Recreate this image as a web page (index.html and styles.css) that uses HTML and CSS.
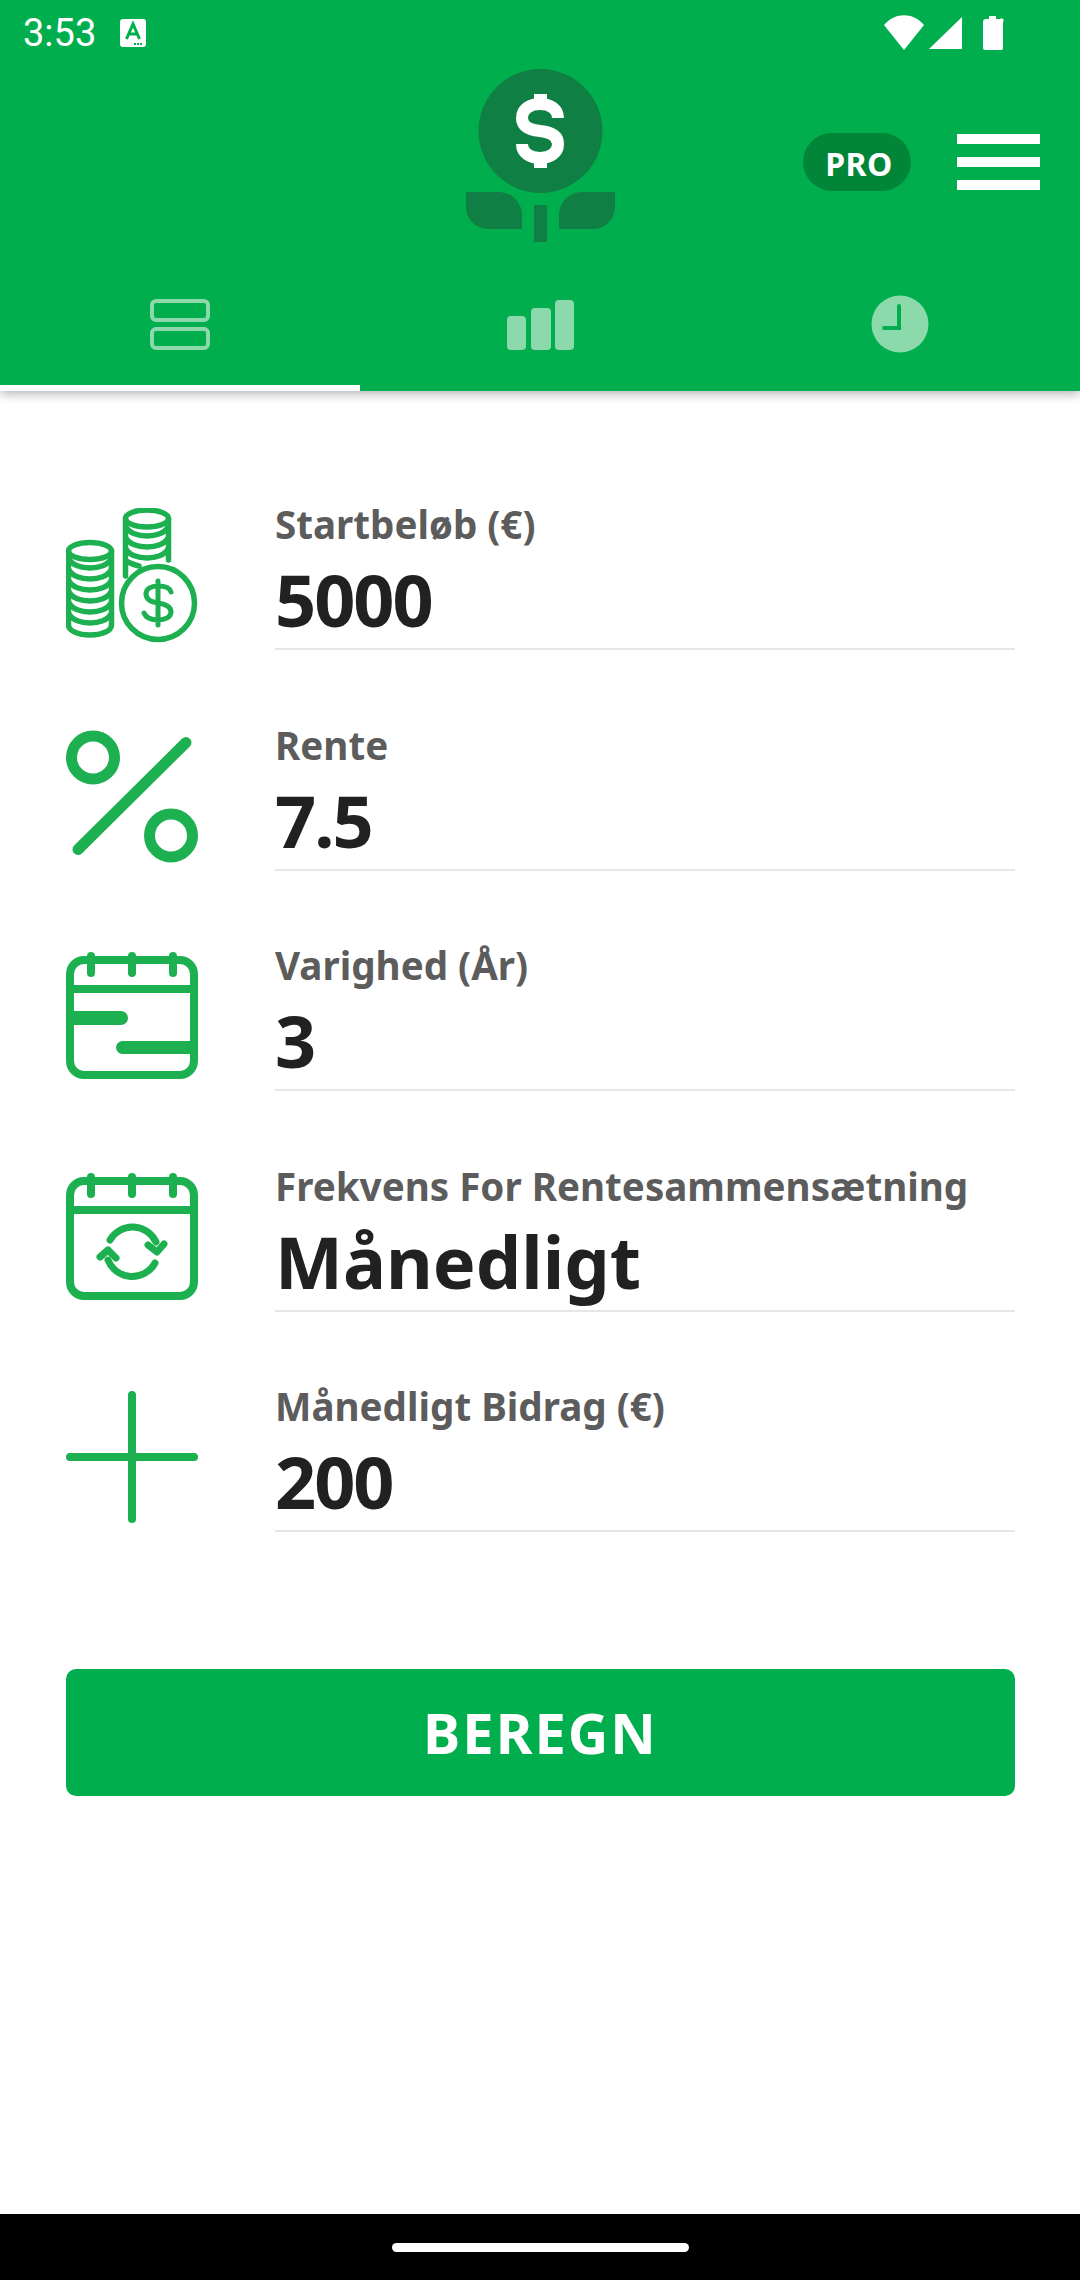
FILE: index.html
```html
<!DOCTYPE html>
<html lang="da">
<head>
    <meta charset="UTF-8">
    <meta name="viewport" content="width=device-width, initial-scale=1.0">
    <title>Rentes rente</title>
    <link rel="stylesheet" href="styles.css">
</head>
<body>
    <div class="app">
        <header class="appbar">
            <div class="statusbar">
                <span class="clock">3:53</span>
                <svg class="status-a" viewBox="0 0 26 28">
                    <path fill="#fff" d="M3 0h20a3 3 0 0 1 3 3v22a3 3 0 0 1-3 3H3a3 3 0 0 1-3-3V3a3 3 0 0 1 3-3z"/>
                    <path fill="none" stroke="#00ae4d" stroke-width="3" d="M6.500 20L13 5l6.500 15M9 15h8"/>
                    <path stroke="#00ae4d" stroke-width="2" stroke-dasharray="2 1" d="M14 25h9"/>
                </svg>
                <svg class="status-icons" viewBox="0 0 120 36">
                    <path fill="#fff" d="M0 10C11-3 29-3 40 10L20 35z"/>
                    <path fill="#fff" d="M45 34L78 2v32z"/>
                    <path fill="#fff" d="M105 4V1h7v3h4a2 2 0 0 1 3 3v26a2 2 0 0 1-2 2H101a2 2 0 0 1-2-2V7a3 3 0 0 1 3-3z"/>
                </svg>
            </div>
            <div class="toolbar">
                <div></div>
                <svg class="logo" viewBox="0 0 149 173">
                    <circle cx="74.500" cy="62" r="62" fill="#0f7f43"/>
                    <path fill="#0f7f43" d="M0 123h33a23 23 0 0 1 23 23v14H22A22 22 0 0 1 0 138z"/>
                    <path fill="#0f7f43" d="M149 123h-33a23 23 0 0 0-23 23v14h34a22 22 0 0 0 22-22z"/>
                    <path fill="#0f7f43" d="M68 136h13v37H68z"/>
                    <path fill="none" stroke="#fff" stroke-width="12" d="M92 49c0-9-8-14-18-14s-18 5-18 14 8 12 18 13 18 4 18 13-8 14-18 14-18-5-18-14"/>
                    <path fill="#fff" d="M68 25h13v12H68zM68 87h13v12H68z"/>
                </svg>
                <div class="toolbar-actions">
                    <span class="pro">PRO</span>
                    <div class="menu"><span></span><span></span><span></span></div>
                </div>
            </div>
            <nav class="tabs">
                <div class="tab active">
                    <svg class="tab-icon" viewBox="0 0 60 60">
                        <rect x="2" y="7" width="56" height="19" rx="4" fill="none" stroke="#8cd9ac" stroke-width="4"/>
                        <rect x="2" y="35" width="56" height="19" rx="4" fill="none" stroke="#8cd9ac" stroke-width="4"/>
                    </svg>
                </div>
                <div class="tab">
                    <svg class="tab-icon" viewBox="0 0 68 60">
                        <rect x="1" y="22" width="19" height="34" rx="4" fill="#8cd9ac"/>
                        <rect x="25" y="14" width="20" height="42" rx="4" fill="#8cd9ac"/>
                        <rect x="49" y="6" width="19" height="50" rx="4" fill="#8cd9ac"/>
                    </svg>
                </div>
                <div class="tab">
                    <svg class="tab-icon" viewBox="0 0 60 60">
                        <circle cx="30" cy="30" r="28.500" fill="#8cd9ac"/>
                        <path fill="none" stroke="#00ae4d" stroke-width="4" stroke-linecap="round" d="M29 12v22H14"/>
                    </svg>
                </div>
            </nav>
        </header>

        <main class="form">
            <div class="row">
                <svg class="row-icon" viewBox="0 0 132 136">
                    <g fill="none" stroke="#1db050" stroke-width="5.500" stroke-linecap="round">
                        <ellipse cx="24" cy="43" rx="21.500" ry="8.500"/>
                        <path d="M2.500 43v74c0 6 10 10 21.500 10s21.500-4 21.500-10V43"/>
                        <path d="M3 51c3 6 12 9 21 9s18-3 21-9M3 62c3 6 12 9 21 9s18-3 21-9M3 73c3 6 12 9 21 9s18-3 21-9M3 84c3 6 12 9 21 9s18-3 21-9M3 95c3 6 12 9 21 9s18-3 21-9M3 106c3 6 12 9 21 9s18-3 21-9"/>
                        <ellipse cx="81" cy="10.500" rx="21.500" ry="8.500"/>
                        <path d="M59.500 11v57M102.500 11v41"/>
                        <path d="M60 19c3 6 12 9 21 9s18-3 21-9M60 30c3 6 12 9 21 9s18-3 21-9M60 41c3 6 12 9 21 9s18-3 21-9M60 53c4 2 8 4 13 5"/>
                        <circle cx="92" cy="95" r="36.500"/>
                        <path stroke-width="5" d="M105 84c-1-4-6-6-13-6s-12 3-12 8 5 8 12 9 13 4 13 9-6 8-13 8-12-2-14-7M92 73v44"/>
                    </g>
                </svg>
                <div class="field">
                    <label class="field-label">Startbeløb (€)</label>
                    <div class="field-value num">5000</div>
                </div>
            </div>
            <div class="row">
                <svg class="row-icon" viewBox="0 0 132 136">
                    <g fill="none" stroke="#1db050" stroke-width="11" stroke-linecap="round">
                        <circle cx="27" cy="28.500" r="21.500"/>
                        <circle cx="105" cy="106.500" r="21.500"/>
                        <path d="M12 120.500L120 13.500"/>
                    </g>
                </svg>
                <div class="field">
                    <label class="field-label">Rente</label>
                    <div class="field-value num">7.5</div>
                </div>
            </div>
            <div class="row">
                <svg class="row-icon" viewBox="0 0 132 136">
                    <g fill="none" stroke="#1db050" stroke-width="8" stroke-linecap="round">
                        <rect x="4" y="11" width="124" height="115" rx="14"/>
                        <path d="M25 7v17M66 7v17M107 7v17"/>
                        <path stroke-linecap="butt" d="M4 40h124"/>
                        <path stroke-width="14" d="M7 69h48"/>
                        <path stroke-width="13" d="M56.500 98.500H128"/>
                    </g>
                </svg>
                <div class="field">
                    <label class="field-label">Varighed (År)</label>
                    <div class="field-value num">3</div>
                </div>
            </div>
            <div class="row">
                <svg class="row-icon" viewBox="0 0 132 136">
                    <g fill="none" stroke="#1db050" stroke-width="8" stroke-linecap="round" stroke-linejoin="round">
                        <rect x="4" y="11" width="124" height="115" rx="14"/>
                        <path d="M25 7v17M66 7v17M107 7v17"/>
                        <path stroke-linecap="butt" d="M4 40h124"/>
                        <path stroke-width="7" d="M44 70A26 26 0 0 1 90 72M89 93A26 26 0 0 1 42 90"/>
                        <path stroke-width="7" d="M82 75l9 7 7-8M34 87l8-7 8 8"/>
                    </g>
                </svg>
                <div class="field">
                    <label class="field-label">Frekvens For Rentesammensætning</label>
                    <div class="field-value">Månedligt</div>
                </div>
            </div>
            <div class="row">
                <svg class="row-icon" viewBox="0 0 132 136">
                    <path fill="none" stroke="#1db050" stroke-width="8" stroke-linecap="round" d="M66 5v124M4 67h124"/>
                </svg>
                <div class="field">
                    <label class="field-label">Månedligt Bidrag (€)</label>
                    <div class="field-value num">200</div>
                </div>
            </div>
            <button class="calc-btn" type="button">BEREGN</button>
        </main>

        <footer class="navbar"><span class="nav-pill"></span></footer>
    </div>
</body>
</html>
```

FILE: styles.css
```css
* {
    box-sizing: border-box;
}
body {
    margin: 0;
    background: #fff;
    font-family: 'Noto Sans', 'Open Sans', sans-serif;
}
.app {
    width: 1080px;
    height: 2280px;
    display: flex;
    flex-direction: column;
}
.appbar {
    height: 391px;
    background: #00ae4d;
    box-shadow: 0 3px 10px rgba(0,0,0,0.3);
    position: relative;
}
.statusbar {
    height: 66px;
    display: flex;
    align-items: center;
    padding: 0 76px 0 23px;
    color: #fff;
}
.clock {
    font-family: Roboto, sans-serif;
    font-size: 38px;
    width: 97px;
}
.status-a {
    width: 26px;
    height: 28px;
}
.status-icons {
    width: 120px;
    height: 36px;
    margin-left: auto;
}
.toolbar {
    height: 192px;
    display: grid;
    grid-template-columns: 466px 149px 1fr;
    padding-top: 3px;
}
.logo {
    width: 149px;
    height: 173px;
}
.toolbar-actions {
    display: flex;
    justify-content: flex-end;
    align-items: flex-start;
    padding: 64px 40px 0 0;
    gap: 46px;
}
.pro {
    width: 108px;
    height: 58px;
    border-radius: 29px;
    background: #008539;
    color: #fff;
    font-size: 32px;
    font-weight: 700;
    letter-spacing: 0.5px;
    padding: 3px 0 0 4px;
    display: flex;
    align-items: center;
    justify-content: center;
}
.menu {
    width: 83px;
    height: 56px;
    margin-top: 1px;
    display: flex;
    flex-direction: column;
    justify-content: space-between;
}
.menu span {
    height: 10px;
    background: #fff;
}
.tabs {
    height: 133px;
    display: grid;
    grid-template-columns: repeat(3, 360px);
}
.tab {
    display: flex;
    justify-content: center;
    padding-top: 36px;
    border-bottom: 6px solid transparent;
}
.tab.active {
    border-bottom-color: #fff;
}
.tab-icon {
    height: 60px;
}
.form {
    flex: 1;
    padding: 107px 65px 0 66px;
}
.row {
    height: 220.5px;
    display: flex;
    gap: 77px;
}
.row-icon {
    width: 132px;
    height: 136px;
    flex: none;
    margin-top: 10px;
}
.field {
    flex: 1;
    height: 152px;
    border-bottom: 2px solid #e6e6e6;
}
.field-label {
    display: block;
    font-size: 38.6px;
    font-weight: 700;
    line-height: 52px;
    color: #5c5c5c;
}
.field-value {
    margin-top: 2px;
    font-size: 72px;
    font-weight: 700;
    line-height: 94px;
    color: #212121;
}
.num {
    letter-spacing: -2px;
}
.calc-btn {
    display: block;
    width: 949px;
    height: 127px;
    margin-top: 68px;
    border: none;
    border-radius: 10px;
    background: #00ae4d;
    color: #fff;
    font-family: inherit;
    font-size: 56px;
    font-weight: 700;
    letter-spacing: 2px;
}
.navbar {
    height: 66px;
    background: #000;
    display: flex;
    justify-content: center;
    align-items: center;
}
.nav-pill {
    width: 297px;
    height: 9px;
    border-radius: 5px;
    background: #fff;
}
```
